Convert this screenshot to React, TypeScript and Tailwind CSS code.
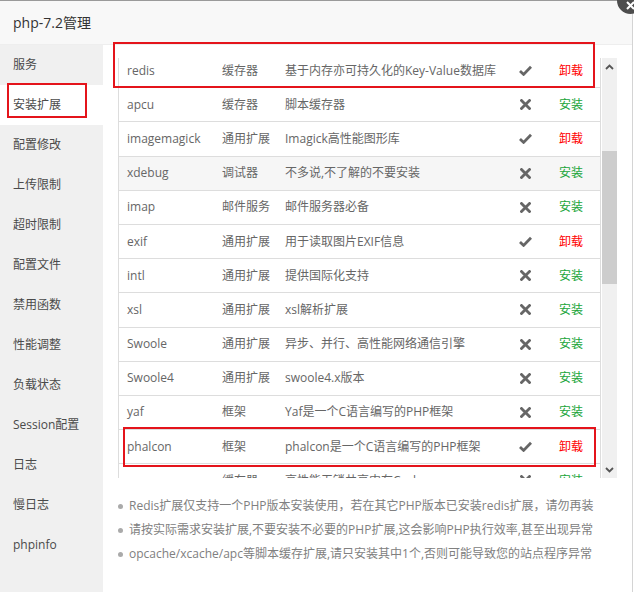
import React from 'react';

type Ext = {
  name: string;
  type: string;
  msg: string;
  installed: boolean;
  hover?: boolean;
};

const menu = [
  '服务',
  '安装扩展',
  '配置修改',
  '上传限制',
  '超时限制',
  '配置文件',
  '禁用函数',
  '性能调整',
  '负载状态',
  'Session配置',
  '日志',
  '慢日志',
  'phpinfo',
];

const exts: Ext[] = [
  { name: 'redis', type: '缓存器', msg: '基于内存亦可持久化的Key-Value数据库', installed: true },
  { name: 'apcu', type: '缓存器', msg: '脚本缓存器', installed: false },
  { name: 'imagemagick', type: '通用扩展', msg: 'Imagick高性能图形库', installed: true },
  { name: 'xdebug', type: '调试器', msg: '不多说,不了解的不要安装', installed: false, hover: true },
  { name: 'imap', type: '邮件服务', msg: '邮件服务器必备', installed: false },
  { name: 'exif', type: '通用扩展', msg: '用于读取图片EXIF信息', installed: true },
  { name: 'intl', type: '通用扩展', msg: '提供国际化支持', installed: false },
  { name: 'xsl', type: '通用扩展', msg: 'xsl解析扩展', installed: false },
  { name: 'Swoole', type: '通用扩展', msg: '异步、并行、高性能网络通信引擎', installed: false },
  { name: 'Swoole4', type: '通用扩展', msg: 'swoole4.x版本', installed: false },
  { name: 'yaf', type: '框架', msg: 'Yaf是一个C语言编写的PHP框架', installed: false },
  { name: 'phalcon', type: '框架', msg: 'phalcon是一个C语言编写的PHP框架', installed: true },
  { name: 'yac', type: '缓存器', msg: '高性能无锁共享内存Cache', installed: false },
];

const notes = [
  'Redis扩展仅支持一个PHP版本安装使用，若在其它PHP版本已安装redis扩展，请勿再装',
  '请按实际需求安装扩展,不要安装不必要的PHP扩展,这会影响PHP执行效率,甚至出现异常',
  'opcache/xcache/apc等脚本缓存扩展,请只安装其中1个,否则可能导致您的站点程序异常',
];

function CheckIcon() {
  return (
    <svg width="13" height="11" viewBox="0 0 13 11">
      <path d="M1 6 L4.6 9.4 L12 1.8" fill="none" stroke="#666" strokeWidth="2.8" strokeLinejoin="miter" />
    </svg>
  );
}

function TimesIcon() {
  return (
    <svg width="11" height="11" viewBox="0 0 11 11">
      <path d="M1.5 1.5 L9.5 9.5 M9.5 1.5 L1.5 9.5" stroke="#666" strokeWidth="2.8" strokeLinecap="square" />
    </svg>
  );
}

export default function App() {
  return (
    <div
      className="relative w-[634px] h-[592px] overflow-hidden bg-white text-[12px]"
      style={{ fontFamily: '"Open Sans", "Noto Sans CJK SC", sans-serif' }}
    >
      <div className="w-[633px] h-full flex flex-col border-r border-[#d4d4d4] border-t border-t-[#9a9a9a]">
        {/* Title */}
        <div className="h-[44px] shrink-0 bg-[#f8f8f8] border-b border-[#eee] px-[13px] flex items-center text-[14px] text-[#333]">
          php-7.2管理
        </div>

        <div className="flex flex-1 min-h-0">
          {/* Side menu */}
          <div className="w-[103px] shrink-0 bg-[#f0f0f0]">
            {menu.map((m) => (
              <div
                key={m}
                className={`h-[40px] pl-[13px] flex items-center text-[#4a4a4a] ${m === '安装扩展' ? 'bg-white' : ''}`}
              >
                {m}
              </div>
            ))}
          </div>

          {/* Extension list */}
          <div className="flex-1 pl-[15px] pt-[13px]">
            <div className="flex h-[420px]">
              <div className="w-[483px] border-l border-r border-[#ddd] overflow-hidden">
                <div className="-mt-[4px]">
                  {exts.map((e) => (
                    <div
                      key={e.name}
                      className={`h-[34.2px] flex items-center border-b border-[#ddd] text-[#666] pl-[8px] ${e.hover ? 'bg-[#f6f6f6]' : ''}`}
                    >
                      <div className="w-[95px] shrink-0">{e.name}</div>
                      <div className="w-[63px] shrink-0">{e.type}</div>
                      <div className="w-[225px] shrink-0 whitespace-nowrap">{e.msg}</div>
                      <div className="w-[30px] shrink-0 flex justify-center">
                        {e.installed ? <CheckIcon /> : <TimesIcon />}
                      </div>
                      <div className={`pl-[19px] ${e.installed ? 'text-[#ff0000]' : 'text-[#20a53a]'}`}>
                        {e.installed ? '卸载' : '安装'}
                      </div>
                    </div>
                  ))}
                </div>
              </div>

              {/* Scrollbar */}
              <div className="w-[15px] ml-[1px] bg-[#f0f0f0] flex flex-col">
                <div className="h-[17px] flex items-center justify-center">
                  <svg width="9" height="6" viewBox="0 0 9 6">
                    <path d="M1 5 L4.5 1.5 L8 5" fill="none" stroke="#555" strokeWidth="1.8" />
                  </svg>
                </div>
                <div className="h-[76px]" />
                <div className="h-[133px] bg-[#cdcdcd]" />
                <div className="flex-1" />
                <div className="h-[17px] flex items-center justify-center">
                  <svg width="9" height="6" viewBox="0 0 9 6">
                    <path d="M1 1 L4.5 4.5 L8 1" fill="none" stroke="#555" strokeWidth="1.8" />
                  </svg>
                </div>
              </div>
            </div>

            {/* Notes */}
            <ul className="mt-[16px] text-[#808080]">
              {notes.map((n) => (
                <li key={n} className="h-[24px] flex items-center whitespace-nowrap">
                  <span className="w-[5px] h-[5px] rounded-full bg-[#aaa] mr-[6px] shrink-0" />
                  {n}
                </li>
              ))}
            </ul>
          </div>
        </div>
      </div>

      {/* close button */}
      <div className="absolute left-[617px] top-[-13px] w-[27px] h-[27px] rounded-full bg-[#4d4d4d] flex items-end justify-center pb-[4px]">
        <svg width="9" height="9" viewBox="0 0 9 9">
          <path d="M1 1 L8 8 M8 1 L1 8" stroke="#fff" strokeWidth="2" />
        </svg>
      </div>

      {/* annotation boxes */}
      <div className="absolute left-[7px] top-[83px] w-[80px] h-[35px] border-2 border-[#e4141b]" />
      <div className="absolute left-[113px] top-[42px] w-[482px] h-[46px] border-2 border-[#e4141b]" />
      <div className="absolute left-[123px] top-[427px] w-[473px] h-[40px] border-2 border-[#e4141b]" />
    </div>
  );
}
